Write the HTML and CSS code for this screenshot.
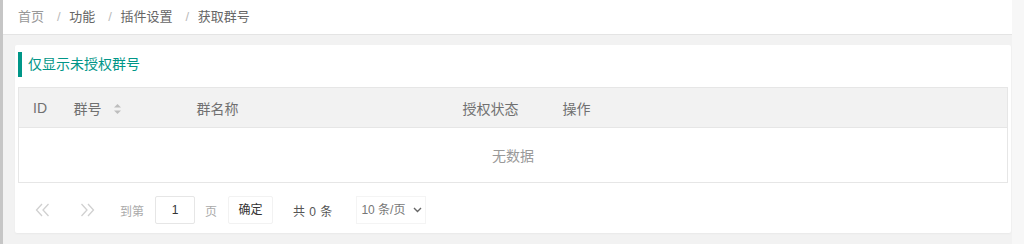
FILE: index.html
```html
<!DOCTYPE html>
<html lang="zh-CN">
<head>
    <meta charset="UTF-8">
    <title>获取群号</title>
    <link rel="stylesheet" href="styles.css">
</head>
<body>
    <div class="edge-left"></div>
    <div class="main">
        <div class="breadcrumb">
            <a class="crumb home">首页</a><span class="sep">/</span>
            <a class="crumb">功能</a><span class="sep">/</span>
            <a class="crumb">插件设置</a><span class="sep">/</span>
            <a class="crumb">获取群号</a>
        </div>
        <div class="content">
            <div class="card">
                <div class="quote">仅显示未授权群号</div>
                <table class="grid">
                    <colgroup>
                        <col class="c-id">
                        <col class="c-num">
                        <col class="c-name">
                        <col class="c-state">
                        <col class="c-op">
                        <col>
                    </colgroup>
                    <thead>
                        <tr>
                            <th class="first">ID</th>
                            <th>群号
                                <svg class="sort" width="9" height="12" viewBox="0 0 9 12">
                                    <path d="M4.5 1 L8 4.5 L1 4.5 Z" fill="#bdbdbd"/>
                                    <path d="M1 7.5 L8 7.5 L4.5 11 Z" fill="#bdbdbd"/>
                                </svg>
                            </th>
                            <th>群名称</th>
                            <th>授权状态</th>
                            <th>操作</th>
                            <th></th>
                        </tr>
                    </thead>
                    <tbody>
                        <tr>
                            <td class="empty" colspan="6">无数据</td>
                        </tr>
                    </tbody>
                </table>
                <div class="pager">
                    <svg class="arrow prev" width="15" height="14" viewBox="0 0 15 14">
                        <path d="M7 1 L1.5 7 L7 13 M13.5 1 L8 7 L13.5 13" fill="none" stroke="#d0d0d0" stroke-width="1.3"/>
                    </svg>
                    <svg class="arrow next" width="15" height="14" viewBox="0 0 15 14">
                        <path d="M1.5 1 L7 7 L1.5 13 M8 1 L13.5 7 L8 13" fill="none" stroke="#d0d0d0" stroke-width="1.3"/>
                    </svg>
                    <span class="label goto">到第</span>
                    <span class="page-input">1</span>
                    <span class="label unit">页</span>
                    <span class="btn">确定</span>
                    <span class="count">共 0 条</span>
                    <span class="limit">10 条/页
                        <svg class="chev" width="9" height="6" viewBox="0 0 9 6">
                            <path d="M1 1 L4.5 4.5 L8 1" fill="none" stroke="#666" stroke-width="1.4"/>
                        </svg>
                    </span>
                </div>
            </div>
        </div>
    </div>
    <div class="edge-right"></div>
</body>
</html>
```

FILE: styles.css
```css
html, body {
    height: 100%;
}
body {
    margin: 0;
    display: flex;
    background-color: #f2f2f2;
    font-family: "Liberation Sans", "Noto Sans CJK SC", sans-serif;
    color: #666;
}
.edge-left {
    width: 3px;
    background-color: #c6c6c6;
}
.edge-right {
    width: 12px;
    background-color: #f7f7f7;
}
.main {
    flex: 1;
}
.breadcrumb {
    height: 34px;
    line-height: 34px;
    padding-left: 15px;
    background-color: #fff;
    border-bottom: 1px solid #e4e4e4;
    font-size: 13px;
}
.crumb {
    color: #666;
}
.crumb.home {
    color: #999;
}
.sep {
    color: #bbb;
    margin: 0 5px 0 13px;
}
.content {
    padding: 10px 1px 0 12px;
}
.card {
    background-color: #fff;
    border-radius: 2px;
    padding: 7px 3px 9px;
    box-shadow: 0 1px 2px rgba(0,0,0,0.04);
}
.quote {
    height: 25px;
    line-height: 25px;
    border-left: 4px solid #009688;
    padding-left: 6px;
    margin-bottom: 10px;
    color: #009688;
    font-size: 14px;
}
.grid {
    width: 100%;
    border-collapse: collapse;
    table-layout: fixed;
    border: 1px solid #e6e6e6;
    font-size: 14px;
}
.c-id { width: 40px; }
.c-num { width: 123px; }
.c-name { width: 266px; }
.c-state { width: 100px; }
.c-op { width: 100px; }
.grid th {
    height: 39px;
    padding: 0 0 0 15px;
    text-align: left;
    font-weight: normal;
    color: #707070;
    background-color: #f2f2f2;
    border-bottom: 1px solid #e6e6e6;
    white-space: nowrap;
}
.grid th.first {
    padding-left: 14px;
}
.sort {
    margin-left: 8px;
    vertical-align: -1px;
}
.empty {
    height: 54px;
    text-align: center;
    color: #999;
    padding: 0;
}
.pager {
    display: flex;
    align-items: center;
    height: 28px;
    margin-top: 13px;
    font-size: 12px;
}
.arrow.prev { margin-left: 17px; }
.arrow.next { margin-left: 30px; }
.label {
    color: #aaa;
}
.goto { margin-left: 25px; }
.page-input {
    margin-left: 11px;
    width: 38px;
    height: 26px;
    line-height: 26px;
    border: 1px solid #e6e6e6;
    border-radius: 2px;
    text-align: center;
    color: #333;
}
.unit { margin-left: 10px; }
.btn {
    margin-left: 11px;
    width: 43px;
    height: 26px;
    line-height: 26px;
    border: 1px solid #f2f2f2;
    border-radius: 2px;
    text-align: center;
    color: #333;
}
.count {
    margin-left: 20px;
    color: #555;
    word-spacing: 1px;
}
.limit {
    margin-left: 24px;
    width: 64px;
    height: 26px;
    line-height: 26px;
    padding-left: 4px;
    border: 1px solid #f4f4f4;
    color: #777;
    white-space: nowrap;
}
.chev {
    margin-left: 4px;
    vertical-align: 1px;
}
```
